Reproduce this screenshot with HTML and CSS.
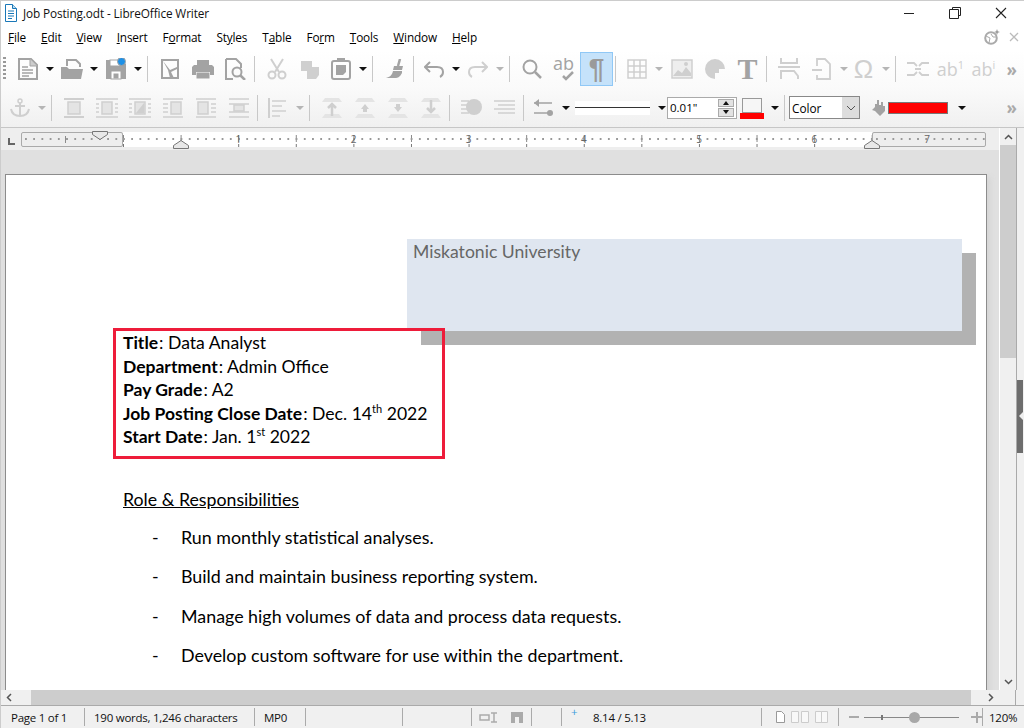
FILE: index.html
```html
<!DOCTYPE html>
<html lang="en">
<head>
  <meta charset="UTF-8" />
  <title>Job Posting.odt - LibreOffice Writer</title>
  <link rel="stylesheet" href="styles.css">
</head>
<body>

  <!-- title bar -->
  <header class="titlebar">
    <svg class="app-icon" width="14" height="18" viewBox="0 0 14 18"><path d="M1.5 .5h7l4 4v13h-11z" fill="#fff" stroke="#1a78b8"/><path d="M8.500 .5v4h4" fill="#bcdcf0" stroke="#1a78b8"/><path d="M4 7h6M4 9.500h6M4 12h6M4 14.500h4" stroke="#1a78b8"/></svg>
    <span class="title-text">Job Posting.odt - LibreOffice Writer</span>
    <div class="win-controls">
      <svg width="12" height="12" viewBox="0 0 12 12"><path d="M1 6.500h10" stroke="#222"/></svg>
      <svg width="12" height="12" viewBox="0 0 12 12"><path d="M3.500 2.500v-2h8v8h-2M.5 2.500h9v9h-9z" fill="none" stroke="#222"/></svg>
      <svg width="12" height="12" viewBox="0 0 12 12"><path d="M1 1l10 10M11 1L1 11" stroke="#222" stroke-width="1.100"/></svg>
    </div>
  </header>

  <!-- menu -->
  <nav class="menubar">
    <span><u>F</u>ile</span>
    <span><u>E</u>dit</span>
    <span><u>V</u>iew</span>
    <span><u>I</u>nsert</span>
    <span>F<u>o</u>rmat</span>
    <span>St<u>y</u>les</span>
    <span>T<u>a</u>ble</span>
    <span>Fo<u>r</u>m</span>
    <span><u>T</u>ools</span>
    <span><u>W</u>indow</span>
    <span><u>H</u>elp</span>
    <div class="menu-right">
      <svg width="16" height="16" viewBox="0 0 16 16"><circle cx="7" cy="9" r="5.800" fill="none" stroke="#aaa" stroke-width="2"/><path d="M2 7l4 2-1 5M7 5l2 3h3" fill="none" stroke="#aaa"/><path d="M13 0l.8 2.200 2.200.8-2.200.8-.8 2.200-.8-2.200-2.200-.8 2.200-.8z" fill="#999"/></svg>
      <svg width="10" height="10" viewBox="0 0 10 10"><path d="M1 1l8 8M9 1L1 9" stroke="#bbb" stroke-width="1.300"/></svg>
    </div>
  </nav>

  <!-- standard toolbar -->
  <div class="toolbar tb-top">
    <span class="grip"></span>

    <span class="cell"><svg class="on" width="22" height="22" viewBox="0 0 22 22"><path d="M2 1h12l6 6v14H2z" fill="none" stroke-width="2"/><path d="M13 1v7h7" fill="#ccc" stroke-width="1"/><path d="M5 9h6M5 12h11M5 15h11M5 18h7" stroke-width="1.500"/></svg></span>
    <span class="dd"></span>
    <span class="cell"><svg class="on" width="24" height="22" viewBox="0 0 24 22"><path d="M7 8V2h9l4 4v3" fill="none" stroke-width="2"/><path class="solid" d="M1 21V9h6l2 2h14l-2 10z"/></svg></span>
    <span class="dd"></span>
    <span class="cell"><svg class="on" width="22" height="22" viewBox="0 0 22 22"><path class="solid" d="M1 2h15l5 4v15H1z"/><rect x="5" y="2" width="10" height="6" fill="#fff"/><rect x="6" y="13" width="10" height="8" fill="#fff"/><rect x="9" y="16" width="4" height="4" fill="#a3a3a3"/><circle cx="16.500" cy="3.500" r="4" fill="#1e90e6"/></svg></span>
    <span class="dd"></span>
    <span class="sep"></span>

    <span class="cell"><svg class="on" width="18" height="20" viewBox="0 0 18 20"><path d="M1 1h16v18H1z" fill="none" stroke-width="2"/><path class="solid" d="M2 2l7 9 7-3v2l-6 3 3 6H9L7 11z"/></svg></span>
    <span class="cell"><svg class="on" width="22" height="20" viewBox="0 0 22 20"><path class="solid" d="M5 1h12v5h3l2 2v8h-4v-3H4v3H0V8l2-2h3z"/><rect x="5" y="14" width="12" height="5" fill="#a3a3a3"/></svg></span>
    <span class="cell"><svg class="on" width="22" height="22" viewBox="0 0 22 22"><path d="M1 1h10l5 5v4M8 21H1V1" fill="none" stroke-width="2"/><circle cx="12" cy="14" r="4.500" fill="none" stroke-width="2"/><path d="M15 17l5 5" stroke-width="2.500"/></svg></span>
    <span class="sep"></span>

    <span class="cell"><svg class="off" width="20" height="22" viewBox="0 0 20 22"><path d="M4 1l8 13M16 1L8 14" stroke-width="2"/><circle cx="5" cy="17" r="3.500" fill="none" stroke-width="2"/><circle cx="15" cy="17" r="3.500" fill="none" stroke-width="2"/></svg></span>
    <span class="cell"><svg class="off" width="20" height="20" viewBox="0 0 20 20"><rect class="solid" x="1" y="2" width="11" height="10"/><path class="solid" d="M7 8h12v8l-3 4H7z"/></svg></span>
    <span class="cell shift-l2"><svg class="on" width="20" height="22" viewBox="0 0 20 22"><rect x="1" y="3" width="18" height="18" rx="2" fill="none" stroke-width="2"/><path class="solid" d="M5 7h10v7l-3 3H5z"/><rect class="solid" x="6" y="0" width="8" height="4"/></svg></span>
    <span class="dd"></span>
    <span class="sep"></span>

    <span class="cell"><svg class="on" width="20" height="20" viewBox="0 0 20 20"><path d="M13 7l2-7" stroke-width="2.500"/><path class="solid" d="M9 7h9l-1 4H8z"/><path class="solid" d="M8 12h9v2c-2 4-4 5-7 5H1c4-1 6-3 7-7z"/></svg></span>
    <span class="sep"></span>

    <span class="cell shift-l2"><svg class="on" width="20" height="18" viewBox="0 0 20 18"><path d="M6 2L1 7l5 5" fill="none" stroke-width="2"/><path d="M1 7h12c4 0 6 2 6 5s-1 4-3 5" fill="none" stroke-width="2"/></svg></span>
    <span class="dd"></span>
    <span class="cell"><svg class="off" width="20" height="18" viewBox="0 0 20 18"><path d="M14 2l5 5-5 5" fill="none" stroke-width="2"/><path d="M19 7H7c-4 0-6 2-6 5s1 4 3 5" fill="none" stroke-width="2"/></svg></span>
    <span class="dd dd-off"></span>
    <span class="sep"></span>

    <span class="cell"><svg class="on" width="20" height="20" viewBox="0 0 20 20"><circle cx="8" cy="8" r="6.500" fill="none" stroke-width="2"/><path d="M13 13l6 6" stroke-width="2.500"/></svg></span>
    <span class="cell shift-l1"><svg class="on" width="22" height="23" viewBox="0 0 22 23"><text x="0" y="12" class="ic-text">ab</text><path d="M10 18l3 3 7-7" fill="none" stroke-width="2.500"/></svg></span>
    <span class="cell pilcrow-btn"><span class="glyph pilcrow">¶</span></span>
    <span class="sep sep-near"></span>

    <span class="cell shift-l1"><svg class="off" width="20" height="20" viewBox="0 0 20 20"><path d="M1 1h18v18H1zM1 7h18M1 13h18M7 1v18M13 1v18" fill="none" stroke-width="1.500"/></svg></span>
    <span class="dd dd-off"></span>
    <span class="cell shift-r1"><svg class="off" width="22" height="20" viewBox="0 0 22 20"><path d="M1 1h20v18H1z" fill="#eee" stroke-width="1.500"/><path class="solid" d="M2 17l5-6 4 3 4-6 5 6v3z" /><circle class="solid" cx="15" cy="5" r="2"/></svg></span>
    <span class="cell"><svg class="off" width="20" height="20" viewBox="0 0 20 20"><path class="solid" d="M10 0a10 10 0 1 0 0 20v-6h4v-4h6A10 10 0 0 0 10 0z"/></svg></span>
    <span class="cell"><span class="glyph big-t">T</span></span>
    <span class="sep"></span>

    <span class="cell"><svg class="off" width="22" height="22" viewBox="0 0 22 22"><path d="M3 0v5h16V0M0 9h22M3 21v-8h13l4 5v3" fill="none" stroke-width="2"/></svg></span>
    <span class="cell"><svg class="off" width="20" height="22" viewBox="0 0 20 22"><path d="M5 8V1h8l5 5v15H5v-4M0 12h10" fill="none" stroke-width="1.800"/></svg></span>
    <span class="dd dd-off"></span>
    <span class="cell shift-l2"><span class="glyph omega">Ω</span></span>
    <span class="dd dd-off"></span>
    <span class="sep"></span>

    <span class="cell"><svg class="off" width="22" height="16" viewBox="0 0 22 16"><path d="M0 2h7l3 3M12 5l3-3h7M0 14h7l3-3M12 11l3 3h7M8 8h6" fill="none" stroke-width="1.800"/></svg></span>
    <span class="cell"><span class="glyph ab">ab<sup>1</sup></span></span>
    <span class="cell"><span class="glyph ab">ab<sup>i</sup></span></span>
    <span class="more">»</span>
  </div>

  <!-- frame toolbar -->
  <div class="toolbar tb-frame">
    <span class="cell"><svg class="off" width="20" height="20" viewBox="0 0 20 20"><circle cx="10" cy="3" r="2" fill="none" stroke-width="1.500"/><path d="M10 5v13M5 8h10M1 11c1 5 5 7 9 7s8-2 9-7" fill="none" stroke-width="2"/></svg></span>
    <span class="dd dd-off"></span>
    <span class="sep"></span>

    <span class="cell"><svg class="off" width="20" height="20" viewBox="0 0 20 20"><path d="M0 1h20M0 19h20" stroke-width="2"/><rect x="4" y="4" width="12" height="12" fill="#e4e4e4" stroke-width="1.500"/></svg></span>
    <span class="cell"><svg class="off" width="22" height="20" viewBox="0 0 22 20"><path d="M0 1h22M0 19h22M0 6h3M0 10h3M0 14h3M19 6h3M19 10h3M19 14h3" stroke-width="1.500"/><rect x="6" y="4" width="10" height="12" fill="#e4e4e4" stroke-width="1.500"/></svg></span>
    <span class="cell"><svg class="off" width="22" height="20" viewBox="0 0 22 20"><path d="M0 1h22M0 19h22M0 6h3M0 10h3M0 14h3M19 6h3M19 10h3M19 14h3" stroke-width="1.500"/><rect x="6" y="4" width="10" height="12" fill="#e4e4e4" stroke-width="1.500"/><path class="solid" d="M7 15l8-10v10z"/></svg></span>
    <span class="cell"><svg class="off" width="20" height="20" viewBox="0 0 20 20"><path d="M0 1h20M0 19h20M0 6h5M0 10h5M0 14h5" stroke-width="1.500"/><rect x="8" y="4" width="10" height="12" fill="#e4e4e4" stroke-width="1.500"/></svg></span>
    <span class="cell"><svg class="off" width="20" height="20" viewBox="0 0 20 20"><path d="M0 1h20M0 19h20M15 6h5M15 10h5M15 14h5" stroke-width="1.500"/><rect x="2" y="4" width="10" height="12" fill="#e4e4e4" stroke-width="1.500"/></svg></span>
    <span class="cell"><svg class="off" width="20" height="20" viewBox="0 0 20 20"><path d="M0 1h20M0 19h20M0 6h20M0 14h20" stroke-width="1.500"/><rect x="5" y="7" width="10" height="6" fill="#e4e4e4" stroke-width="1.500"/></svg></span>
    <span class="sep"></span>

    <span class="cell shift-l2"><svg class="off" width="20" height="20" viewBox="0 0 20 20"><path d="M1 0v20" stroke-width="2"/><path d="M4 3h14M4 8h10M4 13h14M4 18h8" stroke-width="1.500"/></svg></span>
    <span class="dd dd-off"></span>
    <span class="sep"></span>

    <span class="cell"><svg class="off" width="20" height="20" viewBox="0 0 20 20"><path d="M3 0h14l3 4H0zM0 20l3-4h14l3 4z" fill="#e4e4e4" stroke-width="0"/><path d="M10 18V6M6 10l4-4 4 4" fill="none" stroke-width="2.500"/></svg></span>
    <span class="cell"><svg class="off" width="20" height="20" viewBox="0 0 20 20"><path d="M3 0h14l3 4H0zM0 20l3-4h14l3 4z" fill="#e4e4e4" stroke-width="0"/><path class="solid" d="M6 11l4-5 4 5h-2v3H8v-3z"/></svg></span>
    <span class="cell"><svg class="off" width="20" height="20" viewBox="0 0 20 20"><path d="M3 0h14l3 4H0zM0 20l3-4h14l3 4z" fill="#e4e4e4" stroke-width="0"/><path class="solid" d="M6 9l4 5 4-5h-2V6H8v3z"/></svg></span>
    <span class="cell"><svg class="off" width="20" height="20" viewBox="0 0 20 20"><path d="M3 0h14l3 4H0zM0 20l3-4h14l3 4z" fill="#e4e4e4" stroke-width="0"/><path d="M10 2v12M6 10l4 4 4-4" fill="none" stroke-width="2.500"/></svg></span>
    <span class="sep"></span>

    <span class="cell"><svg class="off" width="21" height="18" viewBox="0 0 21 18"><path d="M0 2h8M0 6h6M0 10h6M0 14h8" stroke-width="1.500"/><circle class="solid" cx="13" cy="8" r="8"/></svg></span>
    <span class="cell"><svg class="off" width="21" height="18" viewBox="0 0 21 18"><path d="M0 2h21M4 6h17M0 10h21M4 14h17" stroke-width="1.500"/></svg></span>
    <span class="sep"></span>

    <span class="cell shift-l2"><svg class="on" width="20" height="18" viewBox="0 0 20 18"><path d="M0 4h18M0 14h18" stroke-width="1.500"/><path class="solid" d="M5 0L0 4l5 4z"/><circle class="solid" cx="16" cy="14" r="3"/></svg></span>
    <span class="dd"></span>
    <span class="line-preview"><span class="line-sample"></span></span>
    <span class="dd dd-line"></span>

    <span class="spinbox">
      <span class="spin-val">0.01"</span>
      <span class="spin-btns"><span class="spin-up"></span><span class="spin-down"></span></span>
    </span>
    <span class="line-color"><span class="line-color-box"></span><span class="line-color-bar"></span></span>
    <span class="dd dd-color"></span>
    <span class="sep"></span>

    <span class="select">
      <span class="select-val">Color</span>
      <span class="select-btn"><svg width="10" height="6" viewBox="0 0 10 6"><path d="M1 1l4 4 4-4" fill="none" stroke="#555"/></svg></span>
    </span>
    <svg class="bucket on" width="16" height="17" viewBox="0 0 16 17"><path class="solid" d="M7 1h2v5h2V3h2v4h2v5l-5 5-5-5-3-1 3-3V5h2z"/></svg>
    <span class="swatch"></span>
    <span class="dd dd-fill"></span>
    <span class="more">»</span>
  </div>

  <div class="workspace">
    <div class="main-col">
      <!-- ruler -->
      <div class="ruler-row">
        <span class="tab-mark"></span>
        <div class="ruler">
          <div class="ruler-margin ruler-margin-l"></div>
          <div class="ruler-body">
            <span class="inch">1</span><span class="inch">2</span><span class="inch">3</span>
            <span class="inch">4</span><span class="inch">5</span><span class="inch">6</span>
            <svg class="indent indent-first" width="16" height="9" viewBox="0 0 16 9"><path d="M.5.5h15v3l-7.500 5-7.500-5z" fill="#e8e8e8" stroke="#777"/></svg>
            <svg class="indent indent-left" width="16" height="9" viewBox="0 0 16 9"><path d="M.5 8.500v-3l7.500-5 7.500 5v3z" fill="#e8e8e8" stroke="#777"/></svg>
            <svg class="indent indent-right" width="16" height="9" viewBox="0 0 16 9"><path d="M.5 8.500v-3l7.500-5 7.500 5v3z" fill="#e8e8e8" stroke="#777"/></svg>
          </div>
          <div class="ruler-margin ruler-margin-r"><span class="inch-last">7</span></div>
        </div>
      </div>

      <!-- document -->
      <main class="doc-area">
        <article class="page">
          <div class="banner">Miskatonic University</div>

          <section class="summary">
            <p><b>Title</b>: Data Analyst</p>
            <p><b>Department</b>: Admin Office</p>
            <p><b>Pay Grade</b>: A2</p>
            <p><b>Job Posting Close Date</b>: Dec. 14<sup>th</sup> 2022</p>
            <p><b>Start Date</b>: Jan. 1<sup>st</sup> 2022</p>
          </section>

          <h2 class="role-heading">Role &amp; Responsibilities</h2>
          <ul class="duties">
            <li>Run monthly statistical analyses.</li>
            <li>Build and maintain business reporting system.</li>
            <li>Manage high volumes of data and process data requests.</li>
            <li>Develop custom software for use within the department.</li>
            <li>Other tasks and projects as assigned to the team.</li>
          </ul>
        </article>
      </main>
    </div>

    <aside class="vscroll">
      <span class="sb-arrow"><svg width="9" height="6" viewBox="0 0 9 6"><path d="M1 5l3.500-3.500L8 5" fill="none" stroke="#555" stroke-width="1.500"/></svg></span>
      <span class="vthumb"></span>
      <span class="sb-arrow sb-arrow-end"><svg width="9" height="6" viewBox="0 0 9 6"><path d="M1 1l3.500 3.500L8 1" fill="none" stroke="#555" stroke-width="1.500"/></svg></span>
    </aside>

    <aside class="sidebar"><span class="sidebar-handle"></span></aside>
  </div>

  <div class="hscroll">
    <span class="hs-end"><svg width="6" height="9" viewBox="0 0 6 9"><path d="M5 1L1.500 4.500 5 8" fill="none" stroke="#555" stroke-width="1.500"/></svg></span>
    <span class="hthumb"></span>
    <span class="hs-end hs-end-r"><svg width="6" height="9" viewBox="0 0 6 9"><path d="M1 1l3.500 3.500L1 8" fill="none" stroke="#555" stroke-width="1.500"/></svg></span>
  </div>

  <!-- status bar -->
  <footer class="statusbar">
    <span class="seg seg-page">Page 1 of 1</span>
    <span class="seg seg-words">190 words, 1,246 characters</span>
    <span class="seg seg-mp">MP0</span>
    <span class="seg seg-blank"></span>
    <span class="seg seg-lang"></span>
    <span class="seg seg-mode">
      <svg width="18" height="11" viewBox="0 0 18 11"><rect x="1" y="3" width="9" height="5" fill="none" stroke="#aaa" stroke-width="1.500"/><path d="M12 1h6M12 10h6M15 1v9" stroke="#aaa" stroke-width="1.500"/></svg>
      <svg width="12" height="11" viewBox="0 0 12 11"><path d="M0 0h12v11H8V5H4v6H0z" fill="#aaa"/></svg>
    </span>
    <span class="seg seg-gap"></span>
    <span class="seg seg-pos"><span class="pos-plus">+</span>8.14 / 5.13</span>
    <span class="seg seg-layout">
      <svg width="52" height="12" viewBox="0 0 52 12"><path d="M.5.5h5l3 3v8h-8z" fill="#fff" stroke="#999"/><path d="M15.500.5h7v11h-7zM25.500.5h7v11h-7zM39.500.5h6v11h-6zM45.500.5h6v11h-6z" fill="#f8f8f8" stroke="#ccc"/></svg>
    </span>
    <span class="seg seg-zoom">
      <span class="zoom-minus"></span>
      <span class="zoom-track"><span class="zoom-mid"></span><span class="zoom-knob"></span></span>
      <span class="zoom-plus"></span>
    </span>
    <span class="seg seg-pct">120%</span>
  </footer>

</body>
</html>
```

FILE: styles.css
```css
* {
  box-sizing: border-box;
}
body {
  margin: 0;
  width: 1024px;
  height: 728px;
  overflow: hidden;
  display: flex;
  flex-direction: column;
  background: #fff;
  font-family: "Open Sans", "Noto Sans", sans-serif;
  font-size: 11.5px;
  color: #000;
  border-top: 1px solid #ccc;
  border-left: 1px solid #ccc;
}

/* title bar */
.titlebar {
  height: 23px;
  flex: none;
  display: flex;
  align-items: center;
  padding-left: 3px;
}
.app-icon {
  margin-top: 1px;
}
.title-text {
  margin-left: 5px;
  font-size: 11.8px;
  letter-spacing: -.12px;
  color: #111;
}
.win-controls {
  margin-left: auto;
  display: flex;
  gap: 34px;
  padding-right: 17px;
}

/* menu */
.menubar {
  height: 26px;
  flex: none;
  display: flex;
  align-items: center;
  gap: 15px;
  padding-left: 7px;
  font-size: 11.8px;
  letter-spacing: -.15px;
}
.menu-right {
  margin-left: auto;
  display: flex;
  align-items: center;
  gap: 9px;
  padding-right: 5px;
}

/* toolbars */
.toolbar {
  display: flex;
  align-items: center;
  flex: none;
}
.tb-top {
  height: 38px;
  background: linear-gradient(#fff, #fafafa);
}
.tb-frame {
  height: 40px;
  padding-left: 2px;
  background: linear-gradient(#fafafa, #f0f0f0);
  border-bottom: 1px solid #c6c6c6;
}
.grip {
  width: 3px;
  height: 24px;
  margin: 0 5px 0 2px;
  background: repeating-linear-gradient(#999 0 2px, transparent 2px 4px);
}
.cell {
  width: 33px;
  height: 34px;
  flex: none;
  display: flex;
  align-items: center;
  justify-content: center;
}
.shift-l1 { margin-left: -1px; }
.shift-l2 { margin-left: -2px; }
.shift-r1 { margin-left: 1px; }
.dd {
  width: 11px;
  flex: none;
  display: flex;
  justify-content: center;
}
.dd::after {
  content: "";
  border-left: 4px solid transparent;
  border-right: 4px solid transparent;
  border-top: 4px solid #111;
}
.dd-off::after {
  border-top-color: #b5b5b5;
}
.sep {
  width: 1px;
  height: 26px;
  margin: 0 5px 0 2px;
  flex: none;
  background: #c8c8c8;
}
.dd + .sep {
  margin-left: 4px;
}
.sep-near {
  margin-left: 2px;
}
.more {
  margin-left: auto;
  padding-right: 7px;
  font-size: 17px;
  line-height: 1;
  color: #aaa;
  font-weight: 700;
}
.on, .on * { stroke: #a3a3a3; }
.off, .off * { stroke: #cfcfcf; }
.on .solid { fill: #a3a3a3; stroke: none; }
.off .solid { fill: #cfcfcf; stroke: none; }
.ic-text {
  font-family: "Open Sans", sans-serif;
  font-size: 18px;
  fill: #a3a3a3;
  stroke: none;
}
.glyph {
  line-height: 1;
  color: #cfcfcf;
}
.pilcrow-btn {
  background: #c5e2fa;
  border: 1px solid #90c8f6;
}
.pilcrow {
  font-family: "Liberation Sans", sans-serif;
  font-size: 28px;
  font-weight: 700;
  color: #9a9a9a;
}
.big-t {
  font-family: "Liberation Serif", serif;
  font-size: 30px;
  font-weight: 700;
  color: #a3a3a3;
}
.omega {
  font-family: "Liberation Sans", sans-serif;
  font-size: 26px;
}
.ab {
  font-family: "Open Sans", sans-serif;
  font-size: 18px;
}
.ab sup {
  font-size: 11px;
  line-height: 0;
  vertical-align: 7px;
}

/* frame toolbar controls */
.line-preview {
  width: 75px;
  height: 14px;
  margin-left: 4px;
  display: flex;
  align-items: center;
  background: #fff;
}
.line-sample {
  width: 100%;
  height: 1px;
  background: #333;
}
.dd-line {
  margin-left: 6px;
}
.spinbox {
  width: 70px;
  height: 22px;
  display: flex;
  align-items: center;
  justify-content: space-between;
  padding: 0 2px;
  background: #fff;
  border: 1px solid #aaa;
}
.spin-btns {
  width: 16px;
  height: 18px;
  display: flex;
  flex-direction: column;
  gap: 1px;
}
.spin-up, .spin-down {
  flex: 1;
  display: flex;
  align-items: center;
  justify-content: center;
  background: #e2e2e2;
  border: 1px solid #aaa;
}
.spin-up::after {
  content: "";
  border-left: 3px solid transparent;
  border-right: 3px solid transparent;
  border-bottom: 4px solid #111;
}
.spin-down::after {
  content: "";
  border-left: 3px solid transparent;
  border-right: 3px solid transparent;
  border-top: 4px solid #111;
}
.line-color {
  width: 30px;
  height: 22px;
  display: flex;
  flex-direction: column;
  align-items: center;
  margin-top: 3px;
}
.line-color-box {
  width: 20px;
  height: 15px;
  background: #f6f6f6;
  border: 1px solid #999;
}
.line-color-bar {
  width: 24px;
  height: 6px;
  background: #f00;
}
.dd-color {
  margin-left: 2px;
}
.select {
  width: 71px;
  height: 23px;
  margin-left: -1px;
  display: flex;
  align-items: center;
  justify-content: space-between;
  padding-left: 1px;
  background: #fff;
  border: 1px solid #888;
}
.select-val {
  padding-left: 1px;
  font-size: 11.8px;
}
.select-btn {
  width: 17px;
  height: 21px;
  display: flex;
  align-items: center;
  justify-content: center;
  background: #ddd;
}
.bucket {
  margin-left: 10px;
  flex: none;
}
.swatch {
  width: 60px;
  height: 12px;
  margin-left: 2px;
  background: #f00;
  border: 1px solid #777;
}
.dd-fill {
  margin-left: 8px;
}

/* ruler */
.ruler-row {
  height: 22px;
  flex: none;
  display: flex;
  align-items: center;
  padding-top: 1px;
  background: #eee;
}
.tab-mark {
  width: 7px;
  height: 7px;
  margin: 3px 6px 0 7px;
  border-left: 2px solid #666;
  border-bottom: 2px solid #666;
}
.ruler {
  width: 965px;
  height: 15px;
  display: flex;
}
.ruler-margin {
  height: 100%;
  background-color: #eee;
  border: 1px solid #aaa;
  border-radius: 2px;
}
.ruler-margin-l {
  width: 102px;
  background-image:
    linear-gradient(90deg, #999 2px, transparent 2px),
    linear-gradient(90deg, #8c8c8c 1px, transparent 1px);
  background-size: 8.230px 2px, 200px 7px;
  background-position: 3px 5px, 43px 3px;
  background-repeat: repeat-x;
}
.ruler-margin-r {
  width: 114px;
  display: flex;
  justify-content: flex-end;
  padding-right: 55px;
  background-image:
    linear-gradient(90deg, #999 2px, transparent 2px);
  background-size: 8.230px 2px;
  background-position: 3px 5px;
  background-repeat: repeat-x;
}
.ruler-body {
  position: relative;
  width: 749px;
  height: 100%;
  display: flex;
  background-color: #fff;
  background-image:
    linear-gradient(90deg, #999 2px, transparent 2px),
    linear-gradient(90deg, #888 1px, transparent 1px),
    linear-gradient(90deg, #777 1px, transparent 1px);
  background-size: 8.230px 2px, 57.600px 7px, 57.600px 3px;
  background-position: 0 6px, 0 3px, 0 bottom;
  background-repeat: repeat-x;
}
.inch {
  width: 115.200px;
  flex: none;
  text-align: right;
  font-size: 10px;
  line-height: 14px;
  color: #666;
  transform: translateX(3px);
}
.inch-last {
  font-size: 10px;
  line-height: 13px;
  color: #666;
}
.indent {
  position: absolute;
}
.indent-first {
  left: -31px;
  top: -1px;
}
.indent-left {
  left: 50px;
  top: 8px;
}
.indent-right {
  left: 741px;
  top: 8px;
}

/* document */
.workspace {
  height: 562px;
  flex: none;
  display: flex;
}
.main-col {
  width: 999px;
  flex: none;
  display: flex;
  flex-direction: column;
  border-right: 1px solid #fff;
}
.doc-area {
  height: 540px;
  padding: 24px 0 0 4px;
  overflow: hidden;
  background: #e0e0e0;
}
.page {
  width: 982px;
  height: 700px;
  padding-top: 64px;
  background: #fff;
  border: 1px solid #8c8c8c;
  box-shadow: 3px 3px 6px #d4d4d4;
  font-family: Lato, Carlito, sans-serif;
  font-size: 17.600px;
}
.banner {
  width: 555px;
  height: 92px;
  margin-left: 401px;
  padding: 2px 6px;
  background: #dfe6f0;
  box-shadow: 14px 14px 0 #b2b2b2;
  color: #666;
}
.summary {
  width: 332px;
  height: 131px;
  margin: -3px 0 0 107px;
  padding-left: 7px;
  border: 3px solid #ee1c3a;
  position: relative;
}
.summary p {
  margin: 0;
  height: 23.500px;
  line-height: 23.500px;
}
.summary b {
  font-size: 17.500px;
  padding-right: 1px;
}
.summary sup {
  font-size: 11px;
  line-height: 0;
}
.role-heading {
  margin: 28px 0 0 117px;
  font-size: 17.750px;
  font-weight: 400;
  line-height: 24px;
  text-decoration: underline;
}
.duties {
  list-style: none;
  margin: 14px 0 0;
  padding: 0 0 0 175px;
  font-size: 17.850px;
}
.duties li {
  height: 24px;
  margin-bottom: 15.300px;
  line-height: 24px;
}
.duties li:last-child {
  margin-top: 17px;
}
.duties li::before {
  content: "-";
  display: inline-block;
  width: 29px;
  margin-left: -29px;
}

/* scrollbars */
.vscroll {
  width: 16px;
  flex: none;
  display: flex;
  flex-direction: column;
  background: #f0f0f0;
}
.sb-arrow {
  height: 17px;
  flex: none;
  display: flex;
  align-items: center;
  justify-content: center;
}
.sb-arrow-end {
  margin-top: auto;
}
.vthumb {
  height: 213px;
  background: #cdcdcd;
}
.sidebar {
  flex: 1;
  display: flex;
  align-items: flex-start;
  padding-top: 252px;
  background: #f0f0f0;
  border-left: 1px solid #aaa;
}
.sidebar-handle {
  position: relative;
  width: 6px;
  height: 73px;
  background: #6d6d6d;
}
.sidebar-handle::after {
  content: "";
  position: absolute;
  right: 0;
  top: 32px;
  border-top: 4px solid transparent;
  border-bottom: 4px solid transparent;
  border-right: 4px solid #eee;
}
.hscroll {
  height: 15px;
  flex: none;
  display: flex;
  background: #f0f0f0;
}
.hs-end {
  width: 30px;
  flex: none;
  display: flex;
  align-items: center;
  padding-left: 5px;
}
.hs-end-r {
  width: 45px;
  padding-left: 17px;
  border-right: 1px solid #aaa;
}
.hthumb {
  width: 940px;
  background: #cdcdcd;
}

/* status bar */
.statusbar {
  height: 23px;
  flex: none;
  display: flex;
  align-items: stretch;
  background: #f0f0f0;
  border-top: 1px solid #aaa;
  font-size: 11.500px;
  letter-spacing: -.25px;
  color: #111;
}
.seg {
  flex: none;
  display: flex;
  align-items: center;
  margin: 2px 0;
  border-right: 1px solid #aaa;
}
.seg-page { width: 84px; padding-left: 10px; }
.seg-words { width: 170px; padding-left: 9px; }
.seg-mp { width: 51px; padding-left: 9px; }
.seg-blank { width: 97px; }
.seg-lang { width: 69px; }
.seg-mode { width: 60px; padding-left: 7px; gap: 14px; }
.seg-gap { width: 30px; }
.seg-pos { width: 200px; padding-left: 31px; position: relative; }
.pos-plus {
  position: absolute;
  left: 9px;
  top: -4px;
  color: #3a9bdc;
}
.seg-layout { width: 77px; padding-left: 14px; }
.seg-zoom { width: 144px; padding-left: 10px; gap: 5px; }
.seg-pct { flex: 1; padding-left: 6px; border-right: 0; }
.zoom-minus {
  width: 10px;
  height: 2px;
  background: #aaa;
}
.zoom-plus {
  width: 11px;
  height: 11px;
  margin-left: 7px;
  background:
    linear-gradient(#aaa, #aaa) center / 100% 2px no-repeat,
    linear-gradient(#aaa, #aaa) center / 2px 100% no-repeat;
}
.zoom-track {
  position: relative;
  width: 96px;
  height: 1px;
  background: #888;
}
.zoom-mid {
  position: absolute;
  left: 17px;
  top: -2px;
  width: 2px;
  height: 5px;
  background: #777;
}
.zoom-knob {
  position: absolute;
  left: 45px;
  top: -5px;
  width: 11px;
  height: 11px;
  border-radius: 50%;
  background: #a8a8a8;
}
```
